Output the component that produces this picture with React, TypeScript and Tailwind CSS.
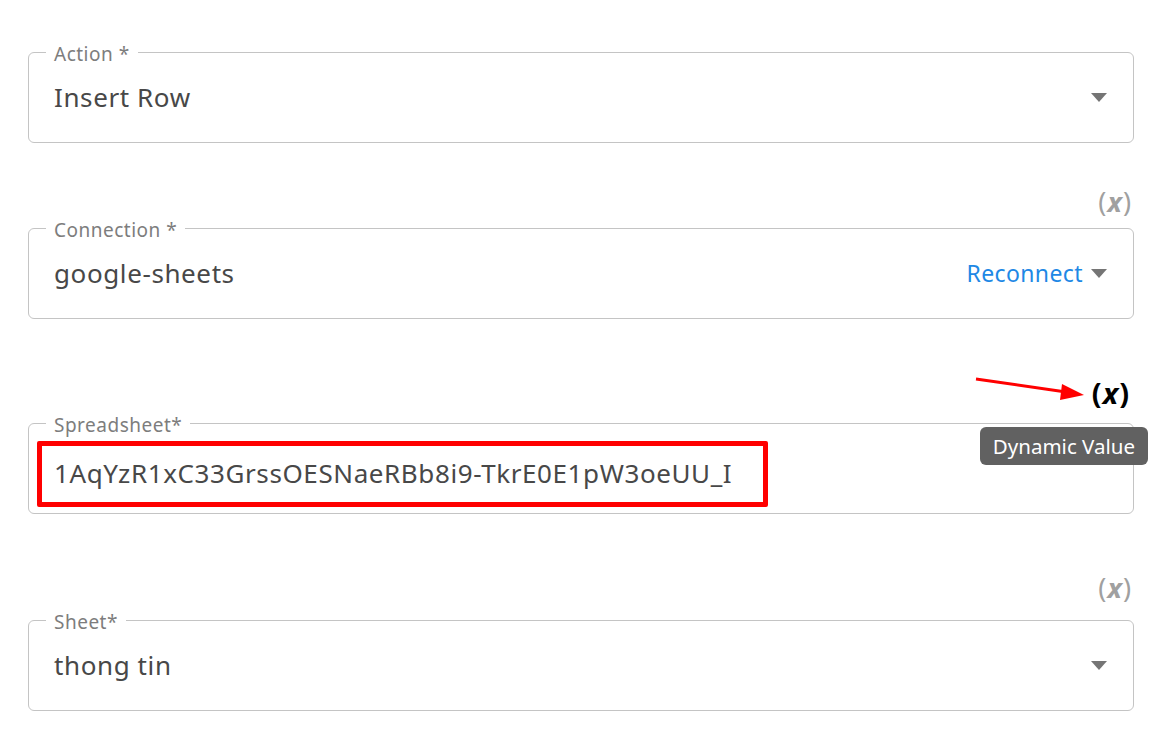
import type { ReactNode } from 'react';

const font = { fontFamily: '"Noto Sans", "Open Sans", sans-serif' };

function Caret() {
  return (
    <svg width="16" height="9" viewBox="0 0 16 9" className="shrink-0">
      <path d="M0 0h16L8 9z" fill="#757575" />
    </svg>
  );
}

function VarIcon({ active = false }: { active?: boolean }) {
  return (
    <span
      className={`leading-[30px] ${active ? 'text-[29px] text-black font-bold' : 'text-[27px] text-[#a0a0a0]'}`}
    >
      (<span className="italic font-bold px-[1px]">x</span>)
    </span>
  );
}

interface FieldProps {
  label: string;
  children: ReactNode;
  right?: ReactNode;
}

function Field({ label, children, right }: FieldProps) {
  return (
    <div className="relative h-[91px] border border-[#c4c4c4] rounded-[6px] flex items-center pl-[25px] pr-[26px]">
      <span className="absolute -top-[12px] left-[17px] px-[8px] bg-white text-[19px] leading-[26px] tracking-[0.5px] text-[#7d7d7d]">
        {label}
      </span>
      <div className="flex-1 min-w-0 text-[26px] tracking-[0.6px] text-[#484848]">{children}</div>
      {right}
    </div>
  );
}

export default function App() {
  return (
    <div className="w-[1163px] h-[748px] bg-white px-[28px] pt-[52px]" style={font}>
      <div className="w-[1106px]">
        {/* Action */}
        <Field label="Action *" right={<Caret />}>
          Insert Row
        </Field>

        {/* Connection */}
        <div className="flex justify-end mt-[44px] mb-[11px] pr-[3px]">
          <VarIcon />
        </div>
        <Field
          label="Connection *"
          right={
            <div className="flex items-center gap-[8px]">
              <span className="text-[23px] tracking-[0.4px] text-[#1e88e5]">Reconnect</span>
              <Caret />
            </div>
          }
        >
          google-sheets
        </Field>

        {/* Spreadsheet */}
        <div className="relative flex justify-end mt-[59px] mb-[15px] pr-[5px]">
          <svg width="120" height="30" viewBox="0 0 120 30" className="absolute right-[40px] -top-[2px]">
            <line x1="2" y1="3" x2="92" y2="16" stroke="#ff0000" strokeWidth="3" />
            <path d="M110 19 L88 8 L86 24 Z" fill="#ff0000" />
          </svg>
          <VarIcon active />
          <div className="absolute right-[-14px] top-[49px] z-10 bg-[#616161] text-white text-[20.5px] leading-[38px] px-[13px] rounded-[6px]">
            Dynamic Value
          </div>
        </div>
        <Field label="Spreadsheet*">
          <div className="-ml-[17px] w-[731px] h-[66px] border-[5px] border-[#ff0000] rounded-[2px] flex items-center pl-[12px] mt-[10px]">
            1AqYzR1xC33GrssOESNaeRBb8i9-TkrE0E1pW3oeUU_I
          </div>
        </Field>

        {/* Sheet */}
        <div className="flex justify-end mt-[59px] mb-[17px] pr-[3px]">
          <VarIcon />
        </div>
        <Field label="Sheet*" right={<Caret />}>
          thong tin
        </Field>
      </div>
    </div>
  );
}
